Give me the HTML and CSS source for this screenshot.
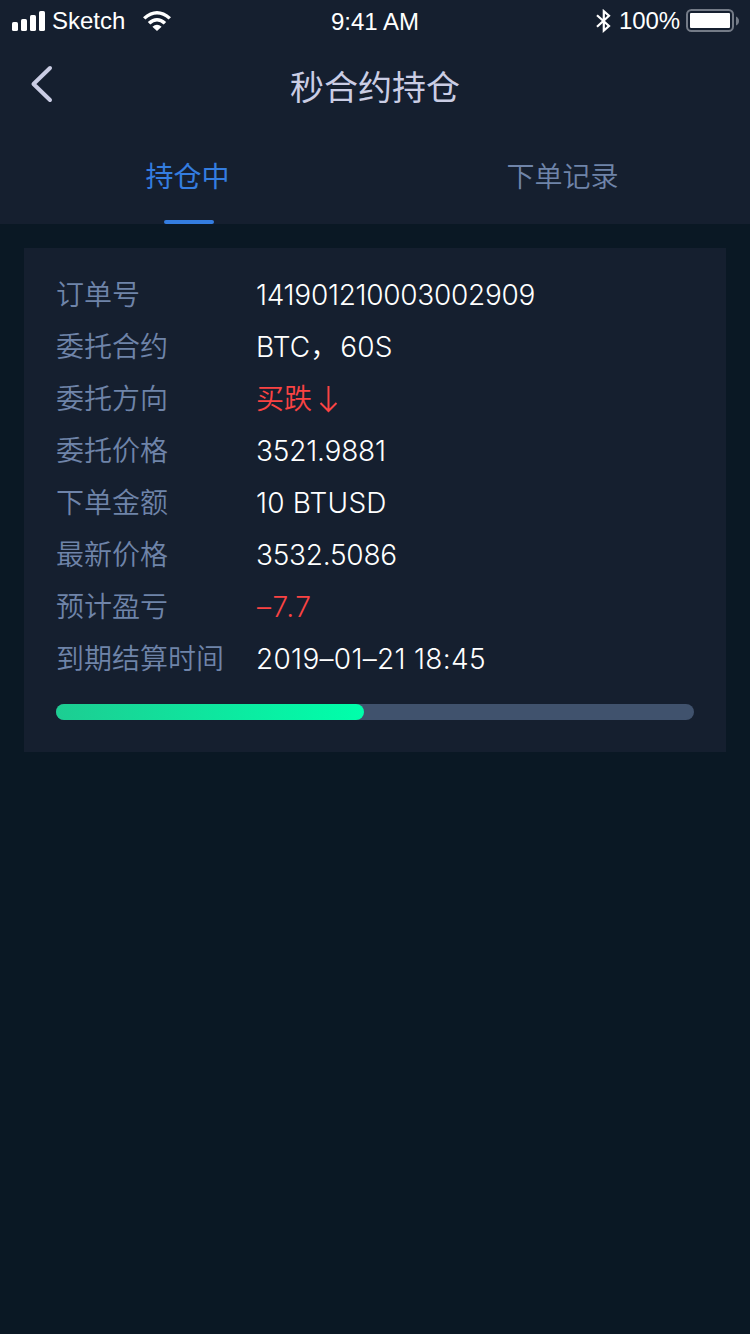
FILE: index.html
```html
<!DOCTYPE html>
<html lang="zh-CN">
<head>
<meta charset="utf-8">
<title>秒合约持仓</title>
<link rel="stylesheet" href="styles.css">
</head>
<body>
<header class="header">
  <div class="status">
    <div class="status-left">
      <svg class="signal" width="33" height="20" viewBox="0 0 33 20"><rect x="0" y="11" width="6" height="9" rx="1.6"/><rect x="9" y="8" width="6" height="12" rx="1.6"/><rect x="18" y="4" width="6" height="16" rx="1.6"/><rect x="27" y="0" width="6" height="20" rx="1.6"/></svg>
      <span class="carrier">Sketch</span>
      <svg class="wifi" width="28" height="20" viewBox="0 0 28 20"><path d="M0 6.2Q14-6 28 6.2L25.6 8.6Q14-1.6 2.4 8.6ZM4.8 11.1Q14 2.7 23.2 11.1L20.7 13.6Q14 7.4 7.3 13.6ZM9.4 15.7Q14 12 18.6 15.7L14 20Z"/></svg>
    </div>
    <span class="clock">9:41 AM</span>
    <div class="status-right">
      <svg class="bluetooth" width="16" height="24" viewBox="0 0 16 24"><path d="M2 6.3L14 17L8.8 21.6V2.2L14 6.8L2 17.7"/></svg>
      <span class="percent">100%</span>
      <svg class="battery" width="54" height="24" viewBox="0 0 54 24"><rect class="battery-case" x="1" y="1" width="46" height="21" rx="4.5"/><rect x="4" y="4" width="40" height="15" rx="1"/><path class="battery-cap" d="M50 7.5Q53 9 53 12Q53 15 50 16.5Z"/></svg>
    </div>
  </div>
  <div class="nav">
    <svg class="back" width="24" height="40" viewBox="0 0 24 40"><path d="M20 4L3.5 20L20 36"/></svg>
    <h1 class="title">秒合约持仓</h1>
  </div>
  <nav class="tabs">
    <a class="tab tab-active">持仓中</a>
    <a class="tab">下单记录</a>
  </nav>
</header>
<main class="card">
  <dl class="details">
    <dt>订单号</dt><dd class="order-no">141901210003002909</dd>
    <dt>委托合约</dt><dd class="contract">BTC<span class="comma">，</span>60S</dd>
    <dt>委托方向</dt><dd class="down direction">买跌<svg width="20" height="28" viewBox="0 0 20 28"><path d="M9.5 1V25.5M1.5 18L9.5 26L17.5 18"/></svg></dd>
    <dt>委托价格</dt><dd class="price">3521.9881</dd>
    <dt>下单金额</dt><dd class="amount">10 BTUSD</dd>
    <dt>最新价格</dt><dd class="latest">3532.5086</dd>
    <dt>预计盈亏</dt><dd class="down profit">–7.7</dd>
    <dt>到期结算时间</dt><dd class="expiry">2019–01–21 18:45</dd>
  </dl>
  <div class="progress"><div class="progress-fill"></div></div>
</main>
</body>
</html>
```
FILE: styles.css
```css
* { box-sizing: border-box; }
body {
  margin: 0;
  min-height: 1334px;
  background: #0a1824;
  color: #fff;
  font-family: Inter, "Noto Sans CJK SC", sans-serif;
}
svg { display: block; flex: none; fill: #fff; }
.header { height: 224px; background: #151f2f; }
.status {
  display: grid;
  grid-template-columns: 1fr auto 1fr;
  height: 40px;
  padding: 0 12px;
  font: 24px/40px "Liberation Sans", Arial, sans-serif;
}
.status-left, .status-right { display: flex; align-items: center; }
.status-right { justify-content: flex-end; margin-right: -2px; }
.signal, .wifi { margin-bottom: 1px; }
.carrier { margin-left: 7px; }
.wifi { margin-left: 18px; }
.clock { padding-top: 2px; }
.percent { margin: 0 7px 0 8px; letter-spacing: -.1px; }
.bluetooth path { fill: none; stroke: #fff; stroke-width: 2.2; }
.battery .battery-case { fill: none; stroke: #747b87; stroke-width: 2; }
.battery .battery-cap { fill: #747b87; }
.battery { margin-left: -1px; }
.nav {
  display: grid;
  grid-template-columns: 60px 1fr 60px;
  align-items: center;
  height: 88px;
  padding: 0 30px;
}
.back path { fill: none; stroke: #cacde4; stroke-width: 4; stroke-linecap: round; stroke-linejoin: round; }
.title {
  margin: 4px 0 0;
  color: #cacde4;
  font: 400 34px/48px "Noto Sans CJK SC", sans-serif;
  text-align: center;
}
.tabs { display: grid; grid-template-columns: 1fr 1fr; height: 96px; }
.tab {
  display: flex;
  flex-direction: column;
  align-items: center;
  justify-content: space-between;
  padding-top: 27px;
  color: #6f84a9;
  font: 350 28px/40px "Noto Sans CJK SC", sans-serif;
}
.tab-active { color: #347de0; font-weight: 400; }
.tab-active::after {
  content: "";
  width: 50px;
  height: 4px;
  margin-left: 3px;
  border-radius: 2px;
  background: #347de0;
}
.card {
  height: 504px;
  margin: 24px 24px 0;
  padding: 20px 32px 32px;
  background: #151f2f;
}
.details {
  display: grid;
  grid-template-columns: 200px 1fr;
  grid-auto-rows: 52px;
  margin: 0 0 20px;
  font-size: 28px;
  line-height: 52px;
}
.details dt {
  color: #6f84a9;
  font-family: "Noto Sans CJK SC", sans-serif;
  font-weight: 350;
  line-height: 50px;
}
.details dd { margin: 0; font-weight: 350; line-height: 54px; white-space: nowrap; }
.details .down { color: #fa4343; }
.order-no { letter-spacing: -.28px; }
.contract { letter-spacing: .1px; }
.comma { margin-right: 2px; }
.price { letter-spacing: -.2px; }
.amount { letter-spacing: .2px; }
.latest { letter-spacing: -.25px; }
.details .profit { padding-left: 1px; letter-spacing: 1.5px; }
.expiry { letter-spacing: .3px; }
.details .direction { display: flex; align-items: center; gap: 7px; padding-top: 1px; line-height: 52px; }
.direction path { fill: none; stroke: #fa4343; stroke-width: 2; }
.progress { height: 16px; border-radius: 8px; background: #40526d; }
.progress-fill {
  width: 308px;
  height: 16px;
  border-radius: 8px;
  background: linear-gradient(90deg, #1dcd92, #00ffab);
}
```
